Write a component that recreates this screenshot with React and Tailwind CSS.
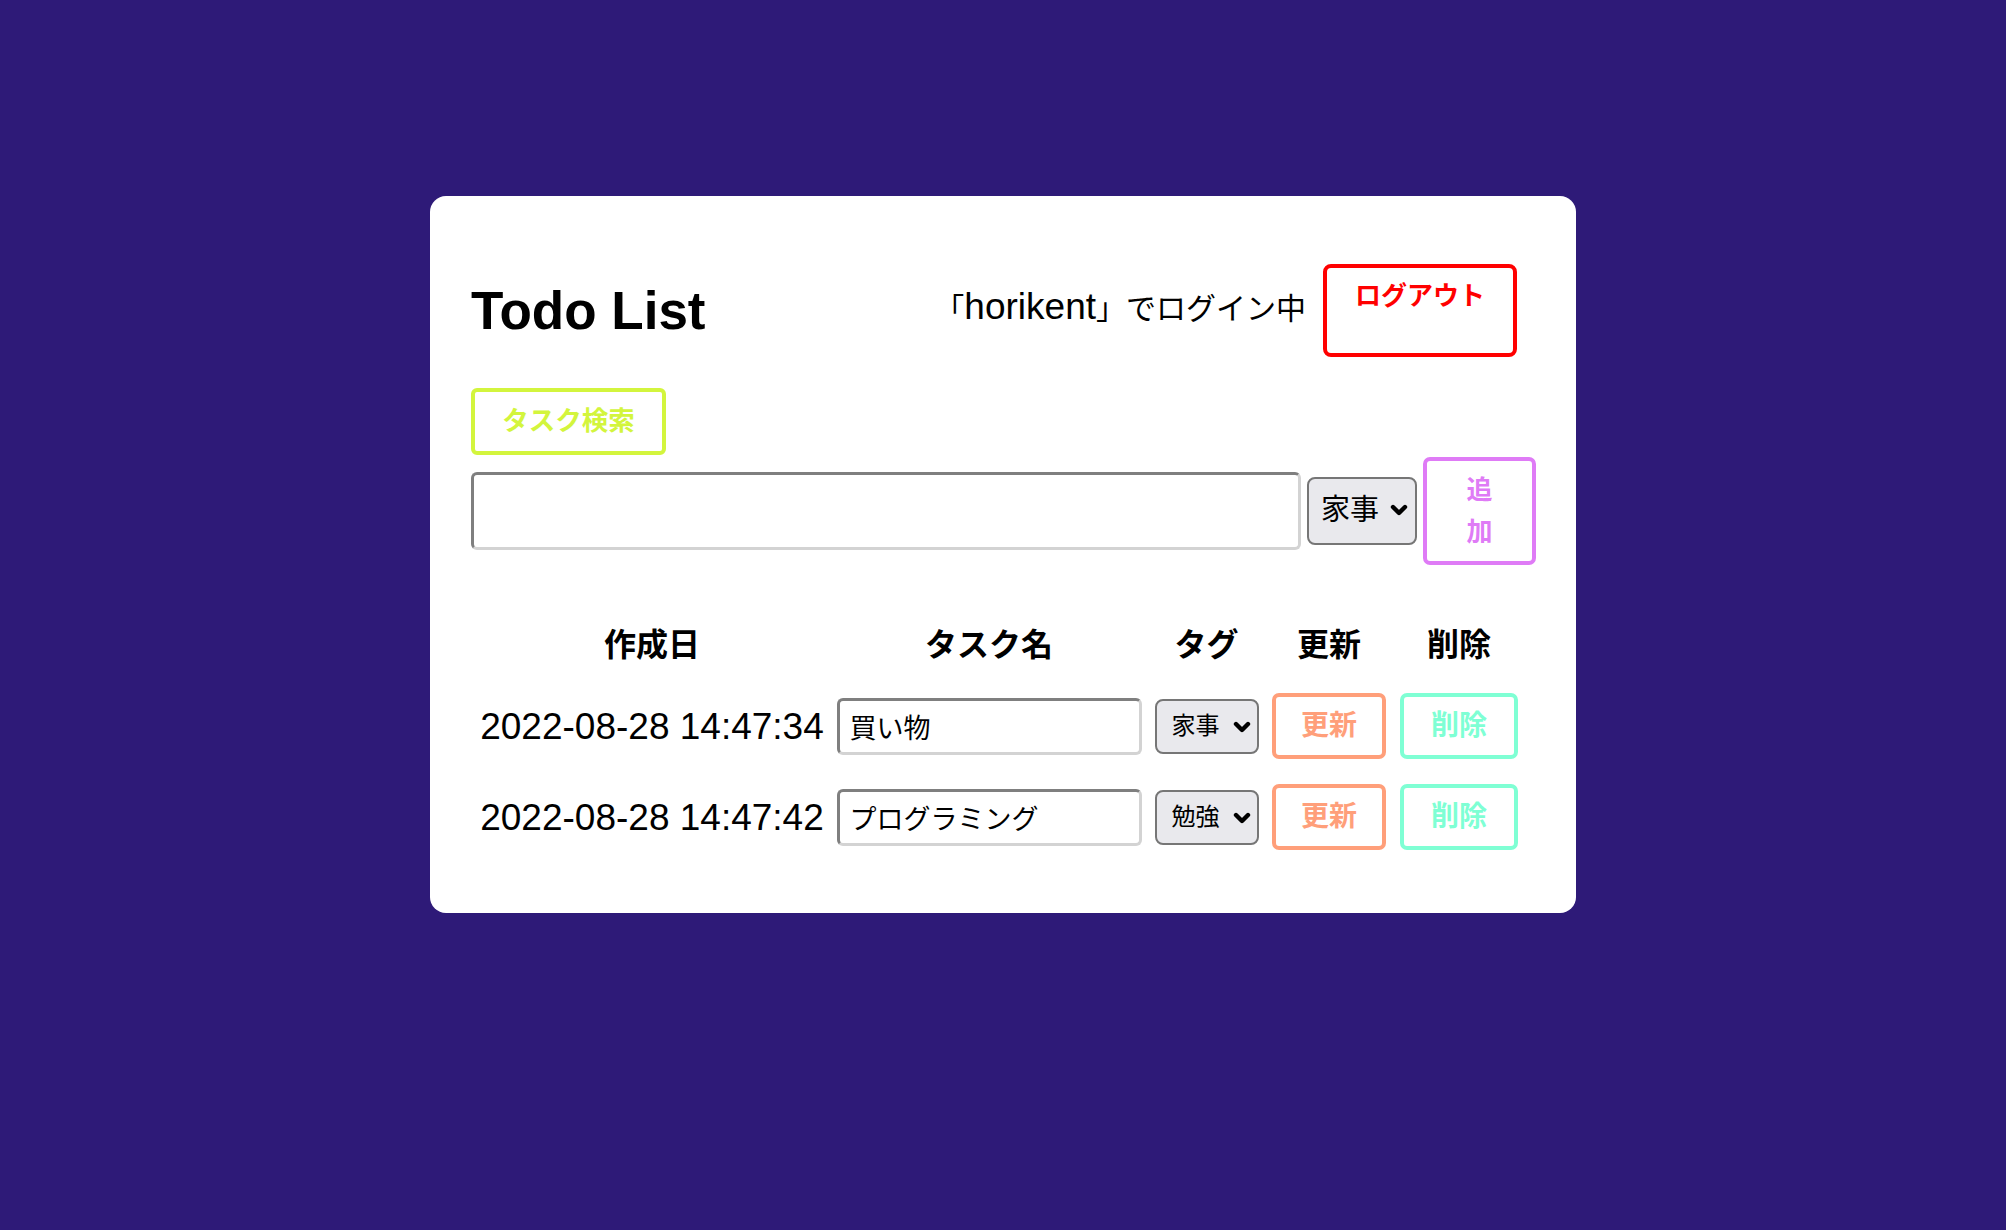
import { useState } from "react";

const Chevron = ({ className }) => (
  <svg viewBox="0 0 18 12" className={className} fill="none">
    <polyline points="3,3 9,9 15,3" stroke="#000" strokeWidth="4.4" strokeLinecap="round" strokeLinejoin="round" />
  </svg>
);

const TagSelect = ({ value, big }) => (
  <div className={big ? "relative h-[68px] w-[110px]" : "relative h-[55px] w-[104px]"}>
    <select
      defaultValue={value}
      className={`h-full w-full appearance-none rounded-[8px] border-2 border-[#767676] bg-[#e9e9ed] text-black outline-none ${
        big ? "pl-[12px] text-[29px]" : "pl-[15px] text-[24px]"
      }`}
    >
      <option>家事</option>
      <option>勉強</option>
      <option>仕事</option>
    </select>
    <Chevron
      className={`pointer-events-none absolute h-[12px] w-[18px] ${big ? "right-[9px] top-[27px]" : "right-[8px] top-[22px]"}`}
    />
  </div>
);

const inset = "border-[3px] border-t-[#7f7f7f] border-l-[#7f7f7f] border-r-[#d3d3d3] border-b-[#d3d3d3] rounded-[6px] outline-none";

const initialTodos = [
  { id: 1, created: "2022-08-28 14:47:34", name: "買い物", tag: "家事" },
  { id: 2, created: "2022-08-28 14:47:42", name: "プログラミング", tag: "勉強" },
];

export default function App() {
  const [todos] = useState(initialTodos);

  return (
    <div className="min-h-screen bg-[#2e1a78] pt-[196px] font-['Liberation_Sans','Noto_Sans_CJK_JP',sans-serif] text-black">
      <div className="mx-auto w-[1146px] rounded-[16px] bg-white pb-[63px] pl-[41px] pr-[40px] pt-[68px]">
        <header className="flex h-[93px] items-center justify-between pr-[19px]">
          <h1 className="text-[53px] font-bold leading-none">Todo List</h1>
          <div className="flex items-center gap-[17px]">
            <p className="mb-[8px] text-[30px] leading-none">
              「<span className="font-['Liberation_Sans'] text-[37px]">horikent</span>」でログイン中
            </p>
            <button className="flex h-[93px] w-[194px] items-start justify-center rounded-[8px] border-4 border-[#ff0000] pt-[9px] text-[26px] font-bold leading-[1.5] text-[#ff0000]">
              ログアウト
            </button>
          </div>
        </header>

        <button className="mt-[31px] flex h-[67px] w-[195px] items-center justify-center rounded-[6px] border-4 border-[#d3f53d] text-[26.5px] font-bold leading-none text-[#d3f53d]">
          タスク検索
        </button>

        <div className="mt-[2px] flex h-[108px] items-center gap-[6px]">
          <input className={`h-[78px] w-[830px] px-[10px] text-[26px] ${inset}`} />
          <TagSelect value="家事" big />
          <button className="h-[108px] w-[113px] rounded-[7px] border-4 border-[#df7bf6] text-[26px] font-bold leading-[42px] text-[#df7bf6]">
            追<br />加
          </button>
        </div>

        <div className="ml-[3px] mt-[57px] grid grid-cols-[356px_318px_117px_128px_132px] grid-rows-[46px_66px_66px] items-center justify-items-center gap-y-[25px]">
          {["作成日", "タスク名", "タグ", "更新", "削除"].map((h) => (
            <div key={h} className="text-[32px] font-bold leading-none">
              {h}
            </div>
          ))}
          {todos.map((t) => (
            <div key={t.id} className="contents">
              <div className="font-['Liberation_Sans'] text-[37px] leading-none">{t.created}</div>
              <input defaultValue={t.name} className={`h-[57px] w-[305px] pl-[10px] text-[27px] ${inset}`} />
              <TagSelect value={t.tag} />
              <button className="h-[66px] w-[114px] rounded-[7px] border-4 border-[#ff9f7a] text-[28px] font-bold leading-none text-[#ff9f7a]">
                更新
              </button>
              <button className="h-[66px] w-[118px] rounded-[7px] border-4 border-[#7fffd4] text-[28px] font-bold leading-none text-[#7fffd4]">
                削除
              </button>
            </div>
          ))}
        </div>
      </div>
    </div>
  );
}
